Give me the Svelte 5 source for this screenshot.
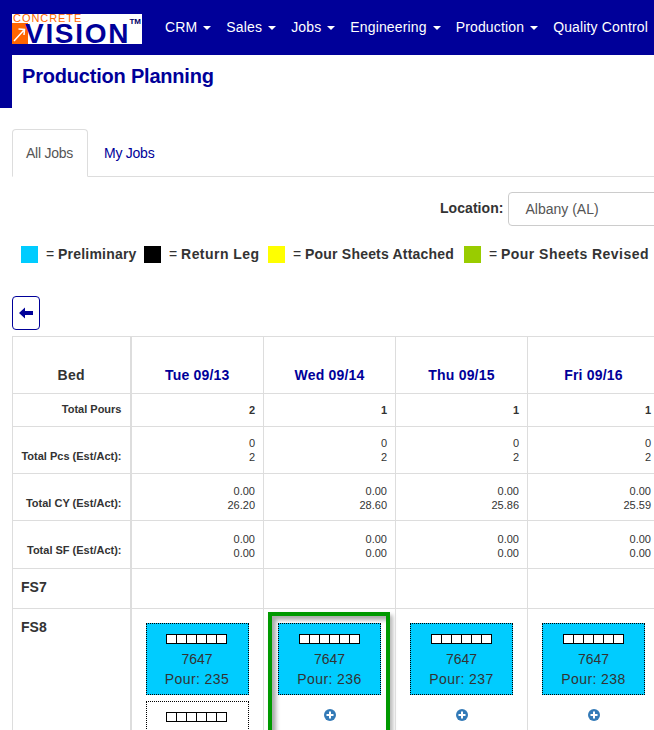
<script lang="ts">
  const navItems = ['CRM', 'Sales', 'Jobs', 'Engineering', 'Production', 'Quality Control']

  const days = [
    { label: 'Tue 09/13', pours: 2, pcs: [0, 2], cy: ['0.00', '26.20'], sf: ['0.00', '0.00'], pour: 235 },
    { label: 'Wed 09/14', pours: 1, pcs: [0, 2], cy: ['0.00', '28.60'], sf: ['0.00', '0.00'], pour: 236 },
    { label: 'Thu 09/15', pours: 1, pcs: [0, 2], cy: ['0.00', '25.86'], sf: ['0.00', '0.00'], pour: 237 },
    { label: 'Fri 09/16', pours: 1, pcs: [0, 2], cy: ['0.00', '25.59'], sf: ['0.00', '0.00'], pour: 238 },
  ]

  const legend = [
    { color: '#00ccff', label: 'Preliminary', width: 123 },
    { color: '#000000', label: 'Return Leg', width: 124 },
    { color: '#ffff00', label: 'Pour Sheets Attached', width: 196 },
    { color: '#99cc00', label: 'Pour Sheets Revised', width: 190 },
  ]

  const boxes = [0, 1, 2, 3, 4, 5]
</script>

<div class="page">
  <nav class="navbar">
    <div class="logo">
      <span class="logo-top">CONCRETE</span>
      <span class="logo-mark">
        <svg width="16" height="21" viewBox="0 0 16 21">
          <path d="M2 18 L12 7 M6.5 6 L12.5 6.5 L12 12" fill="none" stroke="#fff" stroke-width="1.5" />
        </svg>
      </span>
      <span class="logo-main">VISION</span>
      <span class="logo-tm">TM</span>
    </div>
    <ul class="nav-list">
      {#each navItems as item, i}
        <li>{item}{#if i < navItems.length - 1}<span class="caret"></span>{/if}</li>
      {/each}
    </ul>
  </nav>

  <div class="title-bar">
    <h1>Production Planning</h1>
  </div>

  <div class="content">
    <div class="tabs">
      <span class="tab active">All Jobs</span>
      <span class="tab">My Jobs</span>
    </div>

    <div class="location">
      <label for="loc">Location:</label>
      <div id="loc" class="select">Albany (AL)</div>
    </div>

    <div class="legend">
      {#each legend as item}
        <div class="legend-item" style="width: {item.width}px">
          <span class="swatch" style="background: {item.color}"></span>
          <span>= <b>{item.label}</b></span>
        </div>
      {/each}
    </div>

    <button class="back" aria-label="Back">
      <svg width="14" height="12" viewBox="0 0 14 12">
        <path d="M0 6 L6 0.5 L6 4 L14 4 L14 8 L6 8 L6 11.5 Z" fill="#000099" />
      </svg>
    </button>

    <table>
      <colgroup>
        <col class="col-first" />
        <col class="col-tue" />
        <col class="col-day" />
        <col class="col-day" />
        <col class="col-day" />
      </colgroup>
      <thead>
        <tr class="head">
          <th class="bed">Bed</th>
          {#each days as d}<th class="day">{d.label}</th>{/each}
        </tr>
      </thead>
      <tbody>
        <tr class="pours">
          <td class="rowhead">Total Pours</td>
          {#each days as d}<td class="num strong">{d.pours}</td>{/each}
        </tr>
        <tr class="totals">
          <td class="rowhead">Total Pcs (Est/Act):</td>
          {#each days as d}<td class="num">{d.pcs[0]}<br />{d.pcs[1]}</td>{/each}
        </tr>
        <tr class="totals lower">
          <td class="rowhead">Total CY (Est/Act):</td>
          {#each days as d}<td class="num">{d.cy[0]}<br />{d.cy[1]}</td>{/each}
        </tr>
        <tr class="totals lower tall">
          <td class="rowhead">Total SF (Est/Act):</td>
          {#each days as d}<td class="num">{d.sf[0]}<br />{d.sf[1]}</td>{/each}
        </tr>
        <tr class="fs7">
          <td class="bedname">FS7</td>
          {#each days as d}<td></td>{/each}
        </tr>
        <tr class="fs8">
          <td class="bedname">FS8</td>
          {#each days as d, i}
            <td class="slot">
              <div class="drop" class:target={i === 1}>
                <div class="card">
                  <div class="squares">{#each boxes as b}<span class="sq"></span>{/each}</div>
                  <div>7647</div>
                  <div class="pour">Pour: {d.pour}</div>
                </div>
                {#if i === 0}
                  <div class="card blank">
                    <div class="squares">{#each boxes as b}<span class="sq"></span>{/each}</div>
                  </div>
                {:else}
                  <svg class="plus" width="12" height="12" viewBox="0 0 12 12">
                    <circle cx="6" cy="6" r="6" fill="#337ab7" />
                    <path d="M5 2.5h2v2.5h2.5v2H7v2.5H5V7H2.5V5H5z" fill="#fff" />
                  </svg>
                {/if}
              </div>
            </td>
          {/each}
        </tr>
      </tbody>
    </table>
  </div>
</div>

<style>
  :global(body) {
    overflow: hidden;
    background: #fff;
  }

  .page {
    width: 654px;
    height: 730px;
    overflow: hidden;
    font-family: 'Liberation Sans', Arial, sans-serif;
    font-size: 14px;
    color: #333;
  }

  .navbar {
    display: flex;
    align-items: flex-start;
    height: 55px;
    background: #000099;
    padding-left: 12px;
    white-space: nowrap;
  }

  .logo {
    position: relative;
    flex: none;
    width: 130px;
    height: 30px;
    margin-top: 14px;
    background: #fff;
    overflow: hidden;
  }

  .logo-top {
    position: absolute;
    left: 1px;
    top: 0;
    font-size: 11px;
    line-height: 9px;
    letter-spacing: 0.95px;
    color: #ff6600;
  }

  .logo-mark {
    position: absolute;
    left: 0;
    top: 9px;
    width: 16px;
    height: 21px;
    background: #ff6600;
  }

  .logo-mark svg {
    display: block;
  }

  .logo-main {
    position: absolute;
    left: 13px;
    top: 8px;
    font-size: 28px;
    line-height: 24px;
    font-weight: bold;
    letter-spacing: 1.7px;
    color: #000099;
  }

  .logo-tm {
    position: absolute;
    right: 1px;
    top: 4px;
    font-size: 8px;
    line-height: 8px;
    font-weight: bold;
    color: #000066;
  }

  .nav-list {
    display: flex;
    flex: none;
    gap: 15px;
    list-style: none;
    margin: 0 0 0 23px;
    padding: 0;
    color: #fff;
    line-height: 55px;
    letter-spacing: 0.15px;
  }

  .caret {
    display: inline-block;
    margin-left: 6px;
    vertical-align: middle;
    border-top: 4px solid #fff;
    border-left: 4px solid transparent;
    border-right: 4px solid transparent;
  }

  .title-bar {
    height: 53px;
    border-left: 12px solid #000099;
    padding-left: 10px;
  }

  h1 {
    margin: 0;
    padding-top: 10px;
    font-size: 20px;
    line-height: 22px;
    font-weight: bold;
    letter-spacing: -0.2px;
    color: #000099;
  }

  .content {
    padding: 21px 0 0 12px;
  }

  .tabs {
    display: flex;
    height: 47px;
    border-bottom: 1px solid #ddd;
    width: 642px;
  }

  .tab {
    padding: 0 14px 0 13px;
    line-height: 47px;
    height: 48px;
    box-sizing: border-box;
    border: 1px solid transparent;
    color: #000099;
    font-size: 14px;
    letter-spacing: -0.25px;
  }

  .tab + .tab {
    padding: 0 16px 0 15px;
  }

  .tab.active {
    color: #555;
    background: #fff;
    border-color: #ddd #ddd #fff;
    border-radius: 4px 4px 0 0;
  }

  .location {
    display: flex;
    align-items: center;
    gap: 5px;
    margin: 15px 0 0 428px;
    height: 34px;
    white-space: nowrap;
  }

  .location label {
    font-weight: bold;
    font-size: 14px;
    letter-spacing: 0.05px;
    margin-bottom: 2px;
  }

  .select {
    flex: none;
    width: 200px;
    height: 34px;
    box-sizing: border-box;
    border: 1px solid #ccc;
    border-radius: 4px;
    padding-left: 16px;
    line-height: 33px;
    color: #555;
  }

  .legend {
    display: flex;
    margin: 19px 0 0 9px;
    height: 18px;
    white-space: nowrap;
  }

  .legend-item {
    display: flex;
    align-items: center;
    flex: none;
    font-size: 14px;
  }

  .swatch {
    flex: none;
    width: 17px;
    height: 17px;
    margin-right: 8px;
  }

  .legend-item b {
    letter-spacing: 0.2px;
  }

  .legend-item:nth-child(2) b,
  .legend-item:nth-child(4) b {
    letter-spacing: 0.45px;
  }

  .back {
    display: flex;
    align-items: center;
    justify-content: center;
    width: 28px;
    height: 34px;
    margin-top: 33px;
    padding: 0;
    background: #fff;
    border: 1px solid #000099;
    border-radius: 4px;
  }

  table {
    table-layout: fixed;
    border-collapse: collapse;
    width: 647px;
    margin-top: 6px;
  }

  .col-first {
    width: 118px;
  }

  .col-tue {
    width: 133px;
  }

  .col-day {
    width: 132px;
  }

  th,
  td {
    border: 1px solid #ddd;
    padding: 0;
  }

  tr > :first-child {
    border-right: 2px solid #ddd;
  }

  .head {
    height: 57px;
  }

  .head th {
    vertical-align: bottom;
    padding-bottom: 9px;
    font-size: 14px;
    line-height: 17px;
  }

  .bed {
    letter-spacing: 0.4px;
  }

  .day {
    color: #000099;
    letter-spacing: 0.2px;
  }

  .pours {
    height: 33px;
  }

  .totals {
    height: 47px;
  }

  .totals.tall {
    height: 48px;
  }

  .rowhead {
    text-align: right;
    vertical-align: bottom;
    padding: 0 8px 10px 0;
    font-size: 11px;
    line-height: 14px;
    font-weight: bold;
    white-space: nowrap;
  }

  .tall .rowhead {
    padding-bottom: 11px;
  }

  .num {
    text-align: right;
    vertical-align: bottom;
    padding: 0 8px 9px 0;
    font-size: 11px;
    line-height: 14px;
  }

  .lower .num {
    padding-bottom: 8px;
  }

  .strong {
    font-weight: bold;
  }

  .fs7 {
    height: 40px;
  }

  .bedname {
    vertical-align: top;
    padding: 10px 0 0 8px;
    font-size: 14px;
    line-height: 17px;
    font-weight: bold;
  }

  .slot {
    vertical-align: top;
    padding-top: 3px;
  }

  .drop {
    width: 122px;
    height: 130px;
    margin-left: 4px;
    box-sizing: border-box;
    padding: 7px 0 0 6px;
    border: 4px solid transparent;
  }

  .drop.target {
    border-color: #009900;
    box-shadow: inset 4px 4px 4px #aaa, 3px 3px 4px #bbb;
  }

  .card {
    width: 103px;
    height: 72px;
    box-sizing: border-box;
    background: #00ccff;
    border: 1px dotted #000;
    text-align: center;
    font-size: 14px;
    line-height: 20px;
    padding-top: 10px;
  }

  .card.blank {
    background: #fff;
    margin-top: 6px;
  }

  .pour {
    letter-spacing: 0.4px;
  }

  .squares {
    display: flex;
    justify-content: center;
    height: 10px;
    margin-bottom: 5px;
  }

  .sq {
    width: 11px;
    height: 10px;
    box-sizing: border-box;
    margin-left: -1px;
    background: #fff;
    border: 1px solid #000;
  }

  .plus {
    display: block;
    margin: 14px 0 0 46px;
  }
</style>
